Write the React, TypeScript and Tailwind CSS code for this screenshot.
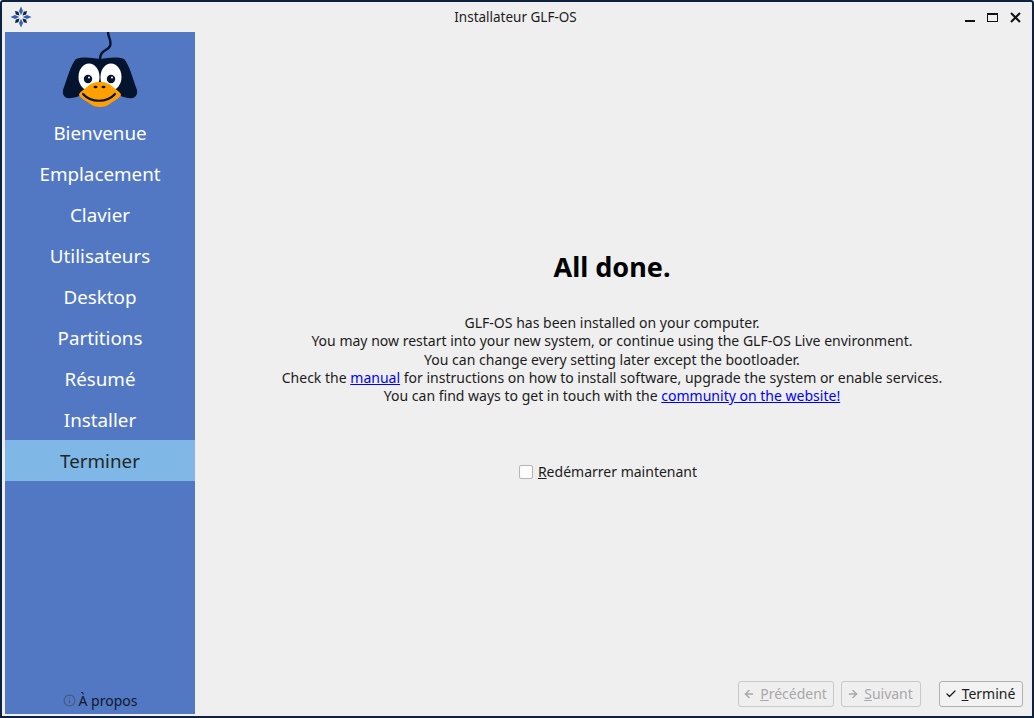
import { ArrowLeft, ArrowRight, Check, Info } from "lucide-react";

const steps = [
  "Bienvenue",
  "Emplacement",
  "Clavier",
  "Utilisateurs",
  "Desktop",
  "Partitions",
  "Résumé",
  "Installer",
  "Terminer",
];

function AppIcon() {
  const cardinal = [0, 90, 180, 270];
  const diagonal = [45, 135, 225, 315];
  return (
    <svg width="22" height="22" viewBox="0 0 22 22">
      {cardinal.map((a) => (
        <path
          key={a}
          d="M11 0.5 L13 5 L11 9.2 L9 5 Z"
          fill="#2f62b8"
          transform={`rotate(${a} 11 11)`}
        />
      ))}
      {diagonal.map((a) => (
        <path
          key={a}
          d="M11 2.5 L12.8 5.5 L11 8.8 L9.2 5.5 Z"
          fill="#10233f"
          transform={`rotate(${a} 11 11)`}
        />
      ))}
    </svg>
  );
}

function Logo() {
  return (
    <svg width="76" height="80" viewBox="0 0 76 80">
      <path
        d="M46 0 C46 5 50 9 48 14 C46 19 38 18 38 27"
        fill="none"
        stroke="#04142f"
        strokeWidth="2.4"
      />
      <path
        d="M14 27 C22 24 30 26 38 27 C46 26 54 24 62 27 C67 32 71 47 75 58 C76 64 72 67 67 66 C61 66 56 62 50 60 L26 60 C20 62 15 66 9 66 C4 67 0 64 1 58 C5 47 9 32 14 27 Z"
        fill="#04142f"
      />
      <ellipse cx="27" cy="45" rx="10.5" ry="13.5" fill="#fff" />
      <ellipse cx="49" cy="45" rx="10.5" ry="13.5" fill="#fff" />
      <circle cx="26" cy="47" r="4.2" fill="#04142f" />
      <circle cx="49" cy="47" r="4.2" fill="#04142f" />
      <circle cx="27" cy="45.6" r="1" fill="#fff" />
      <circle cx="50" cy="45.6" r="1" fill="#fff" />
      <path
        d="M38 50 C44 50 48 52 51 55 C54 58 59 60 59 63 C58 66 53 68 49 71 C45 74 42 75 38 75 C34 75 31 74 27 71 C23 68 18 66 17 63 C17 60 22 58 25 55 C28 52 32 50 38 50 Z"
        fill="#ff9f00"
      />
      <ellipse cx="33.5" cy="55" rx="2" ry="1.2" fill="#04142f" />
      <ellipse cx="41.5" cy="55" rx="2" ry="1.2" fill="#04142f" />
      <path
        d="M21 62 C29 71 45 71 53 62"
        fill="none"
        stroke="#04142f"
        strokeWidth="2.2"
        strokeLinecap="round"
      />
    </svg>
  );
}

export default function App() {
  return (
    <div className="flex h-[718px] w-[1034px] flex-col overflow-hidden rounded-t-[3px] border-2 border-[#0d2240] bg-[#efefef] font-['Noto_Sans',sans-serif] text-[#1c1c1c]">
      <header className="flex h-[30px] shrink-0 items-center pr-[11px] pl-2">
        <div className="flex flex-1">
          <AppIcon />
        </div>
        <span className="text-[13.5px]">Installateur GLF-OS</span>
        <div className="flex flex-1 items-center justify-end gap-[12px]">
          <span className="mt-[7px] h-[2px] w-[10px] bg-[#111]" />
          <span className="h-[9px] w-[11px] border border-t-2 border-[#111]" />
          <svg width="11" height="11" viewBox="0 0 11 11">
            <path d="M1 1 L10 10 M10 1 L1 10" stroke="#111" strokeWidth="2" />
          </svg>
        </div>
      </header>

      <div className="flex min-h-0 flex-1 px-[3px] pb-[2px]">
        <aside className="flex w-[190px] shrink-0 flex-col bg-[#5278c4]">
          <div className="flex h-[80px] justify-center">
            <Logo />
          </div>
          {steps.map((s) => (
            <div
              key={s}
              className={
                s === "Terminer"
                  ? "flex h-[41px] items-center justify-center bg-[#7fb8e6] pt-[2px] text-[18.8px] text-[#232627]"
                  : "flex h-[41px] items-center justify-center pt-[2px] text-[18.8px] text-white"
              }
            >
              {s}
            </div>
          ))}
          <div className="mt-auto flex h-[27px] items-center justify-center gap-[3px] text-[14px] text-[#10182a]">
            <Info size={13} className="text-[#46597f]" />
            <span>À propos</span>
          </div>
        </aside>

        <main className="flex min-w-0 flex-1 flex-col">
          <div className="flex flex-col items-center pt-[212px] text-center text-[14.03px] leading-[18.25px]">
            <h1 className="text-[27px] leading-[46px] font-bold text-black">All done.</h1>
            <div className="mt-[24px]">
              <p>GLF-OS has been installed on your computer.</p>
              <p>You may now restart into your new system, or continue using the GLF-OS Live environment.</p>
              <p>You can change every setting later except the bootloader.</p>
              <p>
                Check the <a className="text-[#0000ff] underline">manual</a> for instructions on how to install software, upgrade the system or enable services.
              </p>
              <p>
                You can find ways to get in touch with the <a className="text-[#0000ff] underline">community on the website!</a>
              </p>
            </div>
            <label className="mt-[58px] mr-[8px] flex items-center gap-[5px]">
              <span className="h-[14px] w-[14px] rounded-[2px] border border-[#b5b5b5] bg-[#fcfcfc]" />
              <span>
                <span className="underline">R</span>edémarrer maintenant
              </span>
            </label>
          </div>

          <footer className="mt-auto flex items-center justify-end pr-[6px] pb-[7px]">
            <button className="mr-[7px] flex h-[26px] w-[96px] items-center justify-center gap-[5px] rounded-[3px] border border-[#c9c9c9] pr-[2px] pb-[1px] text-[14px] text-[#a8a8a8]">
              <ArrowLeft size={12} strokeWidth={3} />
              <span>
                <span className="underline">P</span>récédent
              </span>
            </button>
            <button className="mr-[18px] flex h-[26px] w-[80px] items-center justify-center gap-[5px] rounded-[3px] border border-[#c9c9c9] pr-[2px] pb-[1px] text-[14px] text-[#a8a8a8]">
              <ArrowRight size={12} strokeWidth={3} />
              <span>
                <span className="underline">S</span>uivant
              </span>
            </button>
            <button className="flex h-[26px] w-[84px] items-center justify-center gap-[5px] rounded-[3px] border border-[#b0b0b0] bg-[#f2f2f2] pr-[2px] pb-[1px] text-[14px]">
              <Check size={12} strokeWidth={2.5} />
              <span>
                <span className="underline">T</span>erminé
              </span>
            </button>
          </footer>
        </main>
      </div>
    </div>
  );
}
